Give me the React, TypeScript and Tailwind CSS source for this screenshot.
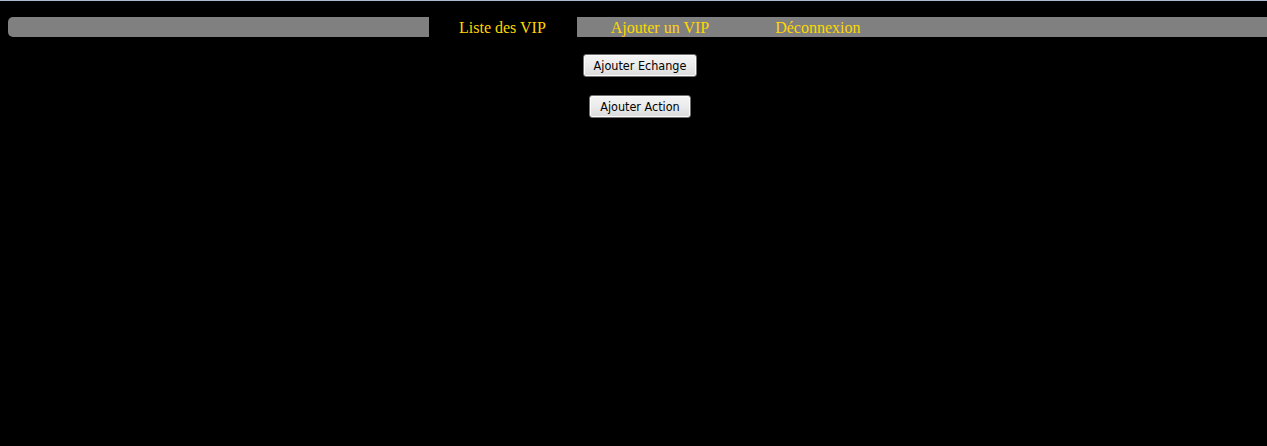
export default function App() {
  const btn =
    "h-[23px] px-[10px] border border-[#707070] rounded-[3px] bg-gradient-to-b from-[#f4f4f4] via-[#ebebeb] to-[#dbdbdb] text-black text-[12.5px] leading-[21px] shadow-[inset_0_0_0_1px_#fcfcfc]";
  return (
    <div className="w-full h-[446px] bg-black overflow-hidden border-t border-[#a9b9d1]">
      <div className="w-[1280px] px-[8px] pt-[16px]">
        <div
          className="h-[20px] bg-[#808080] rounded-[5px] flex pl-[421px] gap-[4px]"
          style={{ fontFamily: '"Liberation Serif", "Times New Roman", serif' }}
        >
          <div className="h-[20px] bg-black pl-[30px] pr-[31px] text-[16px] leading-[21px] text-[#ffd700]">
            Liste des VIP
          </div>
          <div className="h-[20px] pl-[30px] pr-[31px] text-[16px] leading-[21px] text-[#ffd700]">
            Ajouter un VIP
          </div>
          <div className="h-[20px] pl-[31px] pr-[31px] text-[16px] leading-[21px] text-[#ffd700]">
            Déconnexion
          </div>
        </div>
        <div
          className="flex flex-col items-center pt-[17px] gap-[18px]"
          style={{ fontFamily: '"DejaVu Sans Condensed", "DejaVu Sans", sans-serif' }}
        >
          <button className={btn}>Ajouter Echange</button>
          <button className={btn}>Ajouter Action</button>
        </div>
      </div>
    </div>
  );
}
